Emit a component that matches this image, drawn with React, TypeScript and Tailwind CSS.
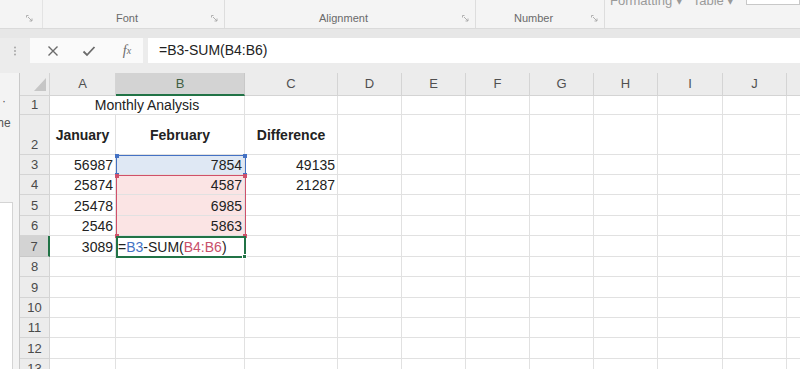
import React from "react";

const colW = [66, 129, 93, 64, 64, 64, 64, 64, 65, 64];
const cols = ["A", "B", "C", "D", "E", "F", "G", "H", "I", "J"];
const rowH = [19, 40, 20, 20, 21, 20, 21, 20, 21, 20, 20, 21, 20];

type CellDef = { text?: React.ReactNode; align?: "left" | "right" | "center"; bold?: boolean; bg?: string };

const data: Record<string, CellDef> = {
  A2: { text: "January", align: "center", bold: true },
  B2: { text: "February", align: "center", bold: true },
  C2: { text: "Difference", align: "center", bold: true },
  A3: { text: "56987", align: "right" },
  B3: { text: "7854", align: "right", bg: "bg-[#dfe8f4]" },
  C3: { text: "49135", align: "right" },
  A4: { text: "25874", align: "right" },
  B4: { text: "4587", align: "right", bg: "bg-[#fbe4e4]" },
  C4: { text: "21287", align: "right" },
  A5: { text: "25478", align: "right" },
  B5: { text: "6985", align: "right", bg: "bg-[#fbe4e4]" },
  A6: { text: "2546", align: "right" },
  B6: { text: "5863", align: "right", bg: "bg-[#fbe4e4]" },
  A7: { text: "3089", align: "right" },
  B7: {
    text: (
      <span>
        =<span className="text-[#4472c4]">B3</span>-SUM(<span className="text-[#c8506a]">B4:B6</span>)
      </span>
    ),
    align: "left",
  },
};

function Launcher() {
  return (
    <svg width="7" height="7" viewBox="0 0 7 7" className="shrink-0">
      <path d="M0.5 0.5 H2.5 M0.5 0.5 V2.5 M2 2 L6 6 M6 3.5 V6 H3.5" stroke="#a8a8a8" strokeWidth="0.9" fill="none" />
    </svg>
  );
}

function Ribbon() {
  return (
    <div className="h-[28px] flex bg-[#f4f4f4] text-[11px] text-[#6a6a6a] overflow-hidden">
      <div className="w-[43px] flex items-end justify-end pb-[6px] pr-[9px] border-r border-[#e3e3e3]">
        <Launcher />
      </div>
      <div className="w-[182px] flex items-end pb-[3px] pr-[6px] border-r border-[#dddddd]">
        <div className="flex-1 text-center leading-[14px]">Font</div>
        <div className="pb-[3px]">
          <Launcher />
        </div>
      </div>
      <div className="w-[251px] flex items-end pb-[3px] pr-[6px] border-r border-[#dddddd]">
        <div className="flex-1 text-center leading-[14px]">Alignment</div>
        <div className="pb-[3px]">
          <Launcher />
        </div>
      </div>
      <div className="w-[129px] flex items-end pb-[3px] pr-[6px] border-r border-[#dddddd]">
        <div className="flex-1 text-center leading-[14px]">Number</div>
        <div className="pb-[3px]">
          <Launcher />
        </div>
      </div>
      <div className="flex-1 flex items-start">
        <div className="ml-[5px] -mt-[9px] text-[13px] text-[#9a9a9a] whitespace-nowrap">Formatting ▾</div>
        <div className="ml-[10px] -mt-[9px] text-[13px] text-[#9a9a9a] whitespace-nowrap">Table ▾</div>
        <div className="ml-[12px] -mt-[2px] h-[7px] flex-1 bg-white border border-[#c8c8c8]" />
      </div>
    </div>
  );
}

function FormulaBar() {
  return (
    <div className="h-[25px] flex items-stretch bg-[#ececec]">
      <div className="w-[30px] flex items-center justify-center">
        <svg width="4" height="10" viewBox="0 0 4 10">
          <circle cx="2" cy="1.5" r="0.9" fill="#a0a0a0" />
          <circle cx="2" cy="5" r="0.9" fill="#a0a0a0" />
          <circle cx="2" cy="8.5" r="0.9" fill="#a0a0a0" />
        </svg>
      </div>
      <div className="w-[113px] bg-[#fafafa] flex items-center">
        <div className="w-[35px] flex justify-end pr-[6px]">
          <svg width="12" height="12" viewBox="0 0 12 12">
            <path d="M1.5 1.5 L10.5 10.5 M10.5 1.5 L1.5 10.5" stroke="#6b6b6b" strokeWidth="1.4" />
          </svg>
        </div>
        <div className="w-[40px] flex justify-center pl-[8px]">
          <svg width="14" height="12" viewBox="0 0 14 12">
            <path d="M1.5 6.5 L5 10 L12.5 2" stroke="#6b6b6b" strokeWidth="1.8" fill="none" />
          </svg>
        </div>
        <div className="flex-1 flex justify-center pl-[6px] text-[#6b6b6b] italic text-[14px] leading-none" style={{ fontFamily: '"Liberation Serif", "DejaVu Serif", serif' }}>
          f<span className="text-[10px] translate-y-[2px] inline-block">x</span>
        </div>
      </div>
      <div className="w-[5px]" />
      <div className="flex-1 bg-white flex items-center pl-[11px] text-[14px] text-[#222]">=B3-SUM(B4:B6)</div>
    </div>
  );
}

function Corner() {
  return (
    <div className="w-[30px] h-[23px] border-r border-b border-[#d4d4d4] bg-[#ececec] flex items-end justify-end pr-[3px] pb-[4px]">
      <svg width="12" height="13" viewBox="0 0 12 13">
        <path d="M12 0 L12 13 L0 13 Z" fill="#c6c6c6" />
      </svg>
    </div>
  );
}

function Grid() {
  const rows = rowH.map((h, i) => i + 1);
  return (
    <div className="relative flex-1 bg-white">
      {/* column headers */}
      <div className="flex h-[23px] bg-[#ececec]">
        <Corner />
        {cols.map((c, i) => (
          <div
            key={c}
            style={{ width: colW[i] }}
            className={
              c === "B"
                ? "shrink-0 h-[23px] bg-[#d3d3d3] border-r border-[#c8c8c8] border-b-2 border-b-[#217346] flex items-center justify-center text-[13px] text-[#3f5f44]"
                : "shrink-0 h-[23px] border-r border-b border-[#d4d4d4] flex items-center justify-center text-[13px] text-[#505050]"
            }
          >
            {c}
          </div>
        ))}
        <div className="flex-1 border-b border-[#d4d4d4]" />
      </div>
      {rows.map((r) => (
        <div key={r} className="flex" style={{ height: rowH[r - 1] }}>
          <div
            className={
              r === 7
                ? "w-[30px] shrink-0 bg-[#d3d3d3] border-b border-[#c8c8c8] border-r-2 border-r-[#217346] flex items-end justify-center pb-[1px] text-[13px] text-[#4a4a4a] leading-[17px]"
                : "w-[30px] shrink-0 bg-[#ececec] border-b border-r border-[#d4d4d4] flex items-end justify-center pb-[1px] text-[13px] text-[#4a4a4a] leading-[17px]"
            }
          >
            {r}
          </div>
          {r === 1 ? (
            <>
              <div className="shrink-0 w-[195px] border-b border-r border-[#e1e1e1] flex items-end justify-center text-[14px] text-[#222] leading-[18px]">
                Monthly Analysis
              </div>
              {cols.slice(2).map((c, i) => (
                <div key={c} style={{ width: colW[i + 2] }} className="shrink-0 border-b border-r border-[#e1e1e1]" />
              ))}
            </>
          ) : (
            cols.map((c, i) => {
              const d = data[c + r];
              const align = d?.align === "right" ? "justify-end pr-[2px]" : d?.align === "center" ? "justify-center items-center" : "justify-start pl-[2px]";
              const vert = d?.align === "center" ? "items-center" : "items-end";
              return (
                <div
                  key={c}
                  style={{ width: colW[i] }}
                  className={`shrink-0 border-b border-r border-[#e1e1e1] flex ${vert} ${align} ${d?.bg ?? ""} text-[14px] text-[#222] leading-[18px] whitespace-nowrap ${d?.bold ? "font-bold" : ""}`}
                >
                  {d?.text}
                </div>
              );
            })
          )}
          <div className="flex-1 border-b border-[#e1e1e1]" />
        </div>
      ))}
      {/* range overlays */}
      <div className="absolute left-[96px] top-[82px] w-[130px] h-[21px] border border-[#4472c4] pointer-events-none">
        <div className="absolute -left-[2px] -top-[2px] w-[4px] h-[4px] bg-[#4472c4]" />
        <div className="absolute -right-[2px] -top-[2px] w-[4px] h-[4px] bg-[#4472c4]" />
        <div className="absolute -left-[2px] -bottom-[2px] w-[4px] h-[4px] bg-[#4472c4]" />
        <div className="absolute -right-[2px] -bottom-[2px] w-[4px] h-[4px] bg-[#4472c4]" />
      </div>
      <div className="absolute left-[96px] top-[102px] w-[130px] h-[62px] border border-[#d0506a] pointer-events-none">
        <div className="absolute -left-[2px] -top-[2px] w-[4px] h-[4px] bg-[#d0506a]" />
        <div className="absolute -right-[2px] -top-[2px] w-[4px] h-[4px] bg-[#d0506a]" />
        <div className="absolute -left-[2px] -bottom-[2px] w-[4px] h-[4px] bg-[#d0506a]" />
        <div className="absolute -right-[2px] -bottom-[2px] w-[4px] h-[4px] bg-[#d0506a]" />
      </div>
      <div className="absolute left-[96px] top-[163px] w-[130px] h-[22px] border-2 border-[#217346] pointer-events-none">
        <div className="absolute -right-[3px] -bottom-[3px] w-[5px] h-[5px] bg-[#217346] border border-white" />
      </div>
    </div>
  );
}

export default function App() {
  return (
    <div
      className="w-[800px] h-[369px] overflow-hidden bg-[#efefef] flex flex-col"
      style={{ fontFamily: '"Liberation Sans", "Open Sans", Arial, sans-serif' }}
    >
      <Ribbon />
      <div className="h-[10px] bg-[#e7e7e7] border-t border-[#dadada]" />
      <FormulaBar />
      <div className="h-[10px] bg-[#ececec]" />
      <div className="flex-1 flex overflow-hidden">
        <div className="w-[20px] shrink-0 flex flex-col bg-[#f3f3f3] border-r border-[#c9c9c9] overflow-hidden">
          <div className="h-[129px] relative text-[12px] text-[#555]">
            <div className="pl-[2px] pt-[22px] leading-[12px]">·</div>
            <div className="-ml-[6px] pt-[10px] leading-[12px] whitespace-nowrap">the</div>
          </div>
          <div className="flex-1 w-[13px] bg-white border-t border-r border-[#d4d4d4]" />
        </div>
        <Grid />
      </div>
    </div>
  );
}
